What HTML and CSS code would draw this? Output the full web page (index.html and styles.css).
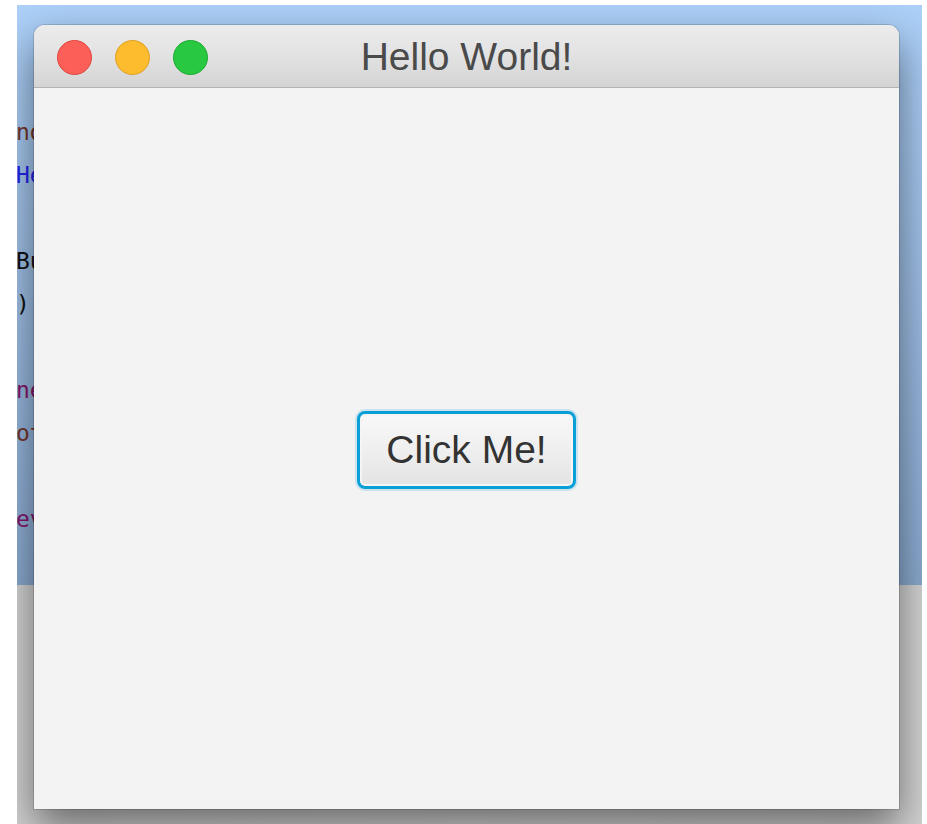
FILE: index.html
```html
<!DOCTYPE html>
<html lang="en">
<head>
<meta charset="utf-8">
<title>Hello World!</title>
<link rel="stylesheet" href="styles.css">
</head>
<body>
<div class="desk">
  <div class="screen">
    <div class="code">
      <div class="ln str-brown">nd</div>
      <div class="ln str-blue">He</div>
      <div class="ln">&nbsp;</div>
      <div class="ln">Bu</div>
      <div class="ln">)</div>
      <div class="ln">&nbsp;</div>
      <div class="ln kw">ne</div>
      <div class="ln str-brown">ot</div>
      <div class="ln">&nbsp;</div>
      <div class="ln kw">ev</div>
    </div>
  </div>
  <div class="floor"></div>

  <div class="window">
    <div class="titlebar">
      <div class="lights">
        <span class="light close"></span>
        <span class="light minimize"></span>
        <span class="light zoom"></span>
      </div>
      <div class="title">Hello World!</div>
      <div></div>
    </div>
    <div class="content">
      <button class="btn" type="button">Click Me!</button>
    </div>
  </div>
</div>
</body>
</html>
```
FILE: styles.css
```css
html, body {
  margin: 0;
  padding: 0;
  background: #ffffff;
}

body {
  width: 927px;
  height: 824px;
  overflow: hidden;
  font-family: "Liberation Sans", Arial, sans-serif;
}

/* desktop behind the window */
.desk {
  position: relative;
  margin: 5px 0 0 17px;
  width: 905px;
  height: 819px;
  overflow: hidden;
  display: flex;
  flex-direction: column;
}

.screen {
  height: 580px;
  flex: none;
  background: linear-gradient(180deg, #acd0f8 0%, #9dbde4 50%, #8aa9cf 100%);
  overflow: hidden;
}

.floor {
  flex: 1;
  background: linear-gradient(90deg, #d2d2d2 0%, #d6d6d6 50%, #d2d2d2 100%);
}

/* editor text peeking out from behind the window */
.code {
  padding-top: 106px;
  margin-left: -1px;
  font-family: "DejaVu Sans Mono", "Liberation Mono", monospace;
  font-size: 23px;
  line-height: 43px;
  color: #111111;
  white-space: nowrap;
}

.ln {
  height: 43px;
}

.str-brown { color: #74352b; }
.str-blue { color: #2323f0; }
.kw { color: #85166a; }

/* the application window */
.window {
  position: absolute;
  left: 17px;
  top: 20px;
  width: 865px;
  height: 784px;
  display: flex;
  flex-direction: column;
  border-radius: 11px 11px 0 0;
  background: #f3f3f3;
  box-shadow: 0 0 0 1px rgba(0, 0, 0, 0.14), 0 18px 40px rgba(0, 0, 0, 0.5);
  overflow: hidden;
}

.titlebar {
  height: 62px;
  flex: none;
  display: grid;
  grid-template-columns: 1fr auto 1fr;
  align-items: center;
  background: linear-gradient(180deg, #ececec 0%, #e2e2e2 50%, #d4d4d4 100%);
  border-bottom: 1px solid #b4b4b4;
}

.lights {
  display: flex;
  gap: 23px;
  padding-left: 23px;
  padding-top: 2px;
}

.light {
  width: 33px;
  height: 33px;
  border-radius: 50%;
  border: 1px solid transparent;
}

.light.close { background: #fc5f57; border-color: #e0463f; }
.light.minimize { background: #fdbc2e; border-color: #dea023; }
.light.zoom { background: #28c840; border-color: #1daa30; }

.title {
  font-size: 39px;
  color: #4a4a4a;
  padding-top: 2px;
}

.content {
  flex: 1;
  display: flex;
  align-items: center;
  justify-content: center;
  padding-top: 3px;
  background: #f3f3f3;
}

.btn {
  width: 219px;
  height: 78px;
  padding: 0;
  border: 3px solid #0a9fd6;
  border-radius: 8px;
  background: linear-gradient(180deg, #f8f8f8 0%, #eeeeee 55%, #e3e3e3 100%);
  box-shadow: 0 0 0 2px rgba(10, 159, 214, 0.18), inset 0 0 0 2px #f5f5f5;
  font-family: "Liberation Sans", Arial, sans-serif;
  font-size: 39px;
  color: #333333;
  cursor: pointer;
}
```
